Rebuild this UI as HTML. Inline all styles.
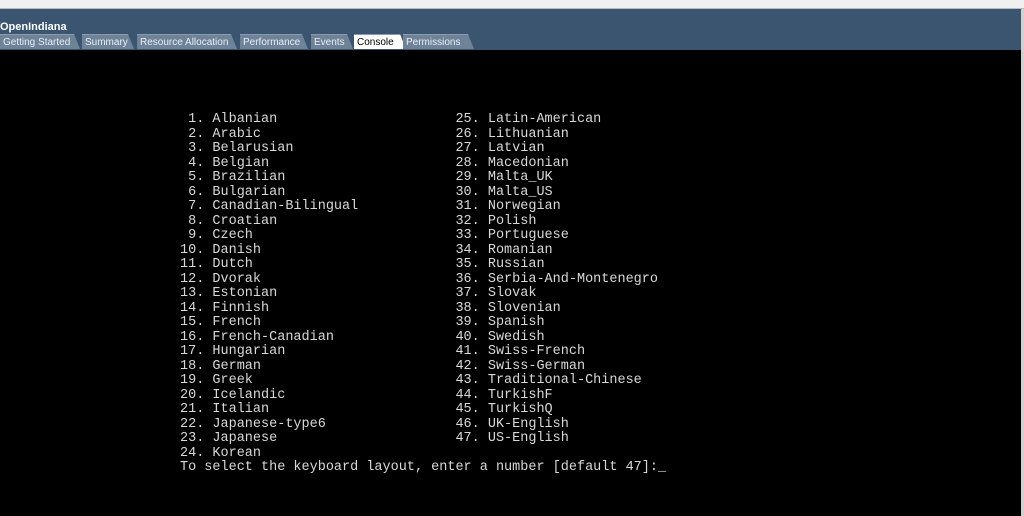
<!DOCTYPE html><html><head><style>
body{margin:0;width:1024px;height:516px;background:#000;overflow:hidden;position:relative;font-family:"Liberation Sans",sans-serif}
#top{position:absolute;left:0;top:0;width:1024px;height:8px;background:#f0f0f0;border-bottom:1px solid #bbb}
#hdr{position:absolute;left:0;top:9px;width:1021px;height:41px;background:#3b5470}
#title{position:absolute;left:0;top:12px;color:#fff;font-weight:bold;font-size:11px}
.tab{position:absolute;top:34px;height:15px;background:#6e8298;color:#e8eef5;font-size:10px;line-height:15px;padding-left:3px;box-sizing:border-box;border-top:1px solid #8a9bb0;clip-path:polygon(0 0,calc(100% - 6px) 0,100% 100%,0 100%)}
.act{background:#fff;color:#000}
#rb{position:absolute;left:1021px;top:9px;width:3px;height:507px;background:#d0d0d0}
pre{position:absolute;left:180px;top:113px;margin:0;color:#d8d8d8;font-family:"Liberation Mono",monospace;font-size:13.5px;line-height:14.5px}
</style></head><body>
<div id="top"></div><div id="hdr"><div id="title">OpenIndiana</div></div>
<div class="tab" style="left:0;width:80px">Getting Started</div>
<div class="tab" style="left:82px;width:52px">Summary</div>
<div class="tab" style="left:137px;width:100px">Resource Allocation</div>
<div class="tab" style="left:240px;width:68px">Performance</div>
<div class="tab" style="left:311px;width:42px">Events</div>
<div class="tab act" style="left:354px;width:52px">Console</div>
<div class="tab" style="left:403px;width:71px">Permissions</div>
<div id="rb"></div>
<pre> 1. Albanian                      25. Latin-American
 2. Arabic                        26. Lithuanian
 3. Belarusian                    27. Latvian
 4. Belgian                       28. Macedonian
 5. Brazilian                     29. Malta_UK
 6. Bulgarian                     30. Malta_US
 7. Canadian-Bilingual            31. Norwegian
 8. Croatian                      32. Polish
 9. Czech                         33. Portuguese
10. Danish                        34. Romanian
11. Dutch                         35. Russian
12. Dvorak                        36. Serbia-And-Montenegro
13. Estonian                      37. Slovak
14. Finnish                       38. Slovenian
15. French                        39. Spanish
16. French-Canadian               40. Swedish
17. Hungarian                     41. Swiss-French
18. German                        42. Swiss-German
19. Greek                         43. Traditional-Chinese
20. Icelandic                     44. TurkishF
21. Italian                       45. TurkishQ
22. Japanese-type6                46. UK-English
23. Japanese                      47. US-English
24. Korean
To select the keyboard layout, enter a number [default 47]:_</pre>
</body></html>
